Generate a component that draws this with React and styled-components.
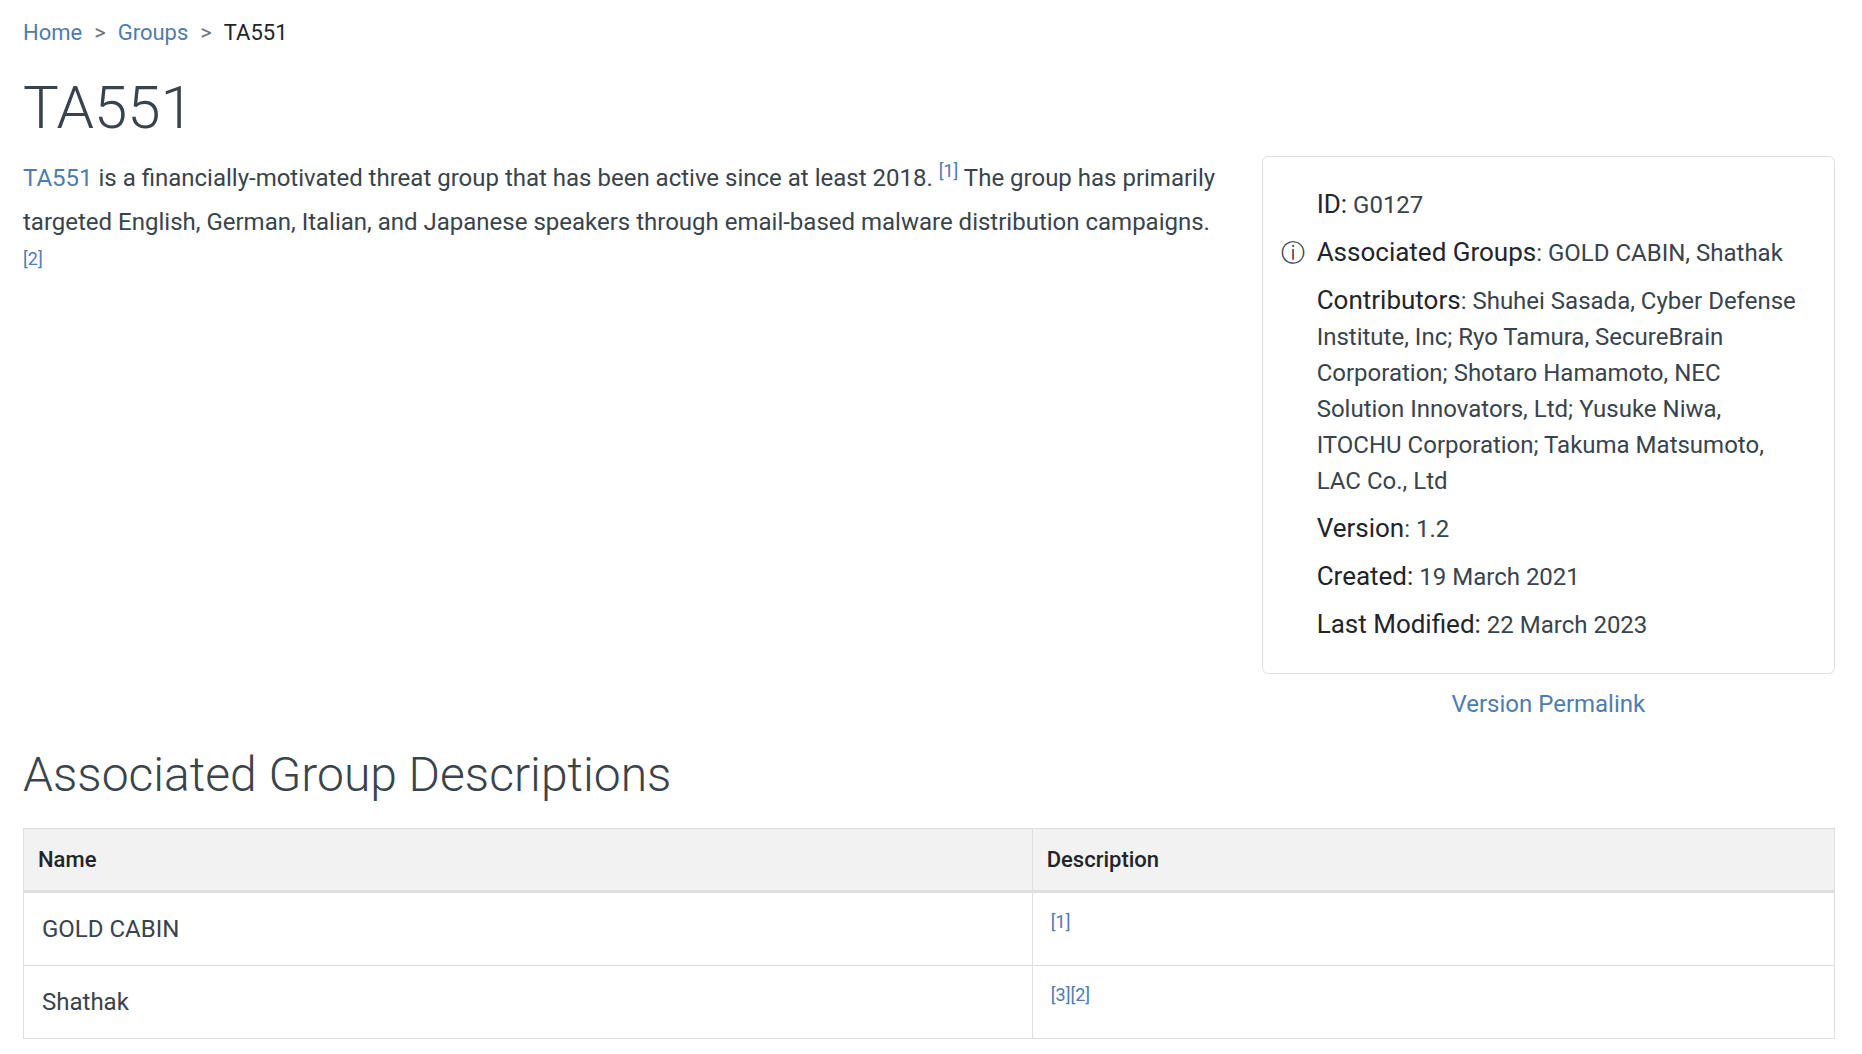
import React from "react";
import styled, { createGlobalStyle } from "styled-components";

const color = {
  text: "#39434c",
  strong: "#212529",
  link: "#4f7cac",
  muted: "#6c757d",
  line: "#dfdfdf",
  head: "#f2f2f2",
};

const GlobalStyle = createGlobalStyle`
  *, *::before, *::after { box-sizing: border-box; }
  body {
    margin: 0;
    background: #fff;
    color: ${color.text};
    font-family: Roboto, "Liberation Sans", sans-serif;
    font-size: 24px;
    line-height: 36px;
  }
`;

const Page = styled.main`
  padding: 15px 27px 15px 23px;
`;

const Link = styled.a`
  color: ${color.link};
  text-decoration: none;
  &:hover { text-decoration: underline; }
`;

const Breadcrumb = styled.ol`
  display: flex;
  flex-wrap: wrap;
  gap: 12px;
  margin: 0;
  padding: 0;
  list-style: none;
  font-size: 22px;
`;

const Crumb = styled.li`
  display: flex;
  gap: 12px;
  color: ${color.strong};
  & + &::before {
    content: ">";
    color: ${color.muted};
  }
`;

const Title = styled.h1`
  margin: 21px 0 12px;
  font-size: 60px;
  line-height: 72px;
  font-weight: 300;
`;

const Row = styled.div`
  display: flex;
  margin: 0 -23px;
`;

const Column = styled.div`
  width: calc(100% * ${(p) => p.$span} / 12);
  padding: 0 23px;
`;

const Description = styled.p`
  margin: 0;
  line-height: 44px;
`;

const Sup = styled.sup`
  font-size: 18px;
  line-height: 0;
  position: relative;
  top: -0.5em;
  vertical-align: baseline;
`;

const Card = styled.section`
  display: flex;
  flex-direction: column;
  gap: 12px;
  padding: 30px 30px 30px 18px;
  border: 1px solid ${color.line};
  border-radius: 6px;
`;

const Fact = styled.div`
  display: grid;
  grid-template-columns: 36px 1fr;
`;

const FactText = styled.div`
  grid-column: 2;
`;

const Label = styled.span`
  color: ${color.strong};
  font-size: 26px;
  line-height: 1;
`;

const Info = styled.span`
  cursor: help;
`;

const Permalink = styled.div`
  margin-top: 12px;
  text-align: center;
`;

const Heading = styled.h2`
  margin: 24px 0;
  font-size: 48px;
  line-height: 58px;
  font-weight: 300;
`;

const Table = styled.table`
  width: 100%;
  border-collapse: collapse;
  border: 1px solid ${color.line};
`;

const Th = styled.th`
  width: ${(p) => p.$width || "auto"};
  padding: 13px 14px 12px;
  border: 1px solid ${color.line};
  border-bottom-width: 3px;
  background: ${color.head};
  color: ${color.strong};
  font-size: 22px;
  font-weight: 500;
  text-align: left;
`;

const Td = styled.td`
  padding: 18px;
  border: 1px solid ${color.line};
  vertical-align: top;
`;

const Cite = ({ n }) => (
  <Sup>
    <Link href={`#ref-${n}`}>[{n}]</Link>
  </Sup>
);

const facts = [
  { label: "ID:", value: "G0127" },
  { label: "Associated Groups", colon: true, value: "GOLD CABIN, Shathak", info: true },
  {
    label: "Contributors",
    colon: true,
    value:
      "Shuhei Sasada, Cyber Defense Institute, Inc; Ryo Tamura, SecureBrain Corporation; Shotaro Hamamoto, NEC Solution Innovators, Ltd; Yusuke Niwa, ITOCHU Corporation; Takuma Matsumoto, LAC Co., Ltd",
  },
  { label: "Version", colon: true, value: "1.2" },
  { label: "Created:", value: "19 March 2021" },
  { label: "Last Modified:", value: "22 March 2023" },
];

const groups = [
  { name: "GOLD CABIN", refs: [1] },
  { name: "Shathak", refs: [3, 2] },
];

export default function App() {
  return (
    <>
      <GlobalStyle />
      <Page>
        <nav>
          <Breadcrumb>
            <Crumb><Link href="#home">Home</Link></Crumb>
            <Crumb><Link href="#groups">Groups</Link></Crumb>
            <Crumb>TA551</Crumb>
          </Breadcrumb>
        </nav>
        <Title>TA551</Title>
        <Row>
          <Column $span={8}>
            <Description>
              <Link href="#ta551">TA551</Link> is a financially-motivated threat group that has been
              active since at least 2018. <Cite n={1} /> The group has primarily targeted English,
              German, Italian, and Japanese speakers through email-based malware distribution
              campaigns. <Cite n={2} />
            </Description>
          </Column>
          <Column $span={4}>
            <Card>
              {facts.map((f) => (
                <Fact key={f.label}>
                  {f.info && <Info>ⓘ</Info>}
                  <FactText>
                    <Label>{f.label}</Label>
                    {f.colon && ":"} {f.value}
                  </FactText>
                </Fact>
              ))}
            </Card>
            <Permalink>
              <Link href="#permalink">Version Permalink</Link>
            </Permalink>
          </Column>
        </Row>
        <Heading>Associated Group Descriptions</Heading>
        <Table>
          <thead>
            <tr>
              <Th scope="col" $width="55.7%">Name</Th>
              <Th scope="col">Description</Th>
            </tr>
          </thead>
          <tbody>
            {groups.map((g) => (
              <tr key={g.name}>
                <Td>{g.name}</Td>
                <Td>
                  {g.refs.map((n) => (
                    <Cite key={n} n={n} />
                  ))}
                </Td>
              </tr>
            ))}
          </tbody>
        </Table>
      </Page>
    </>
  );
}
